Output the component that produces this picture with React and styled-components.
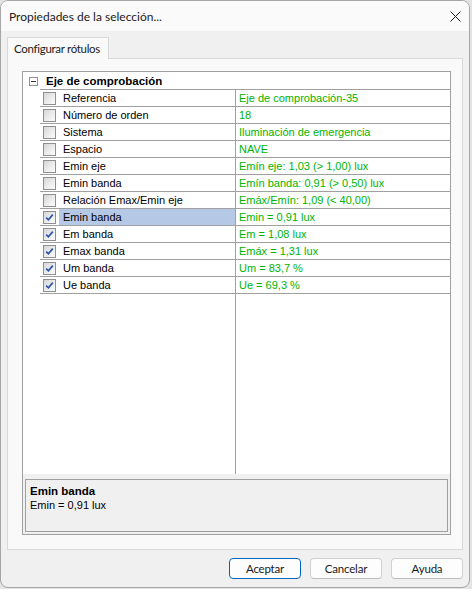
import React from 'react';
import styled, { createGlobalStyle } from 'styled-components';

const Global = createGlobalStyle`
  html, body { margin: 0; padding: 0; background: #e4e4e4; }
  body { width: 472px; height: 589px; overflow: hidden; }
  * { box-sizing: border-box; }
`;

const uiFont = `"Lato", "Noto Sans", sans-serif`;

const Window = styled.div`
  width: 470px;
  height: 588px;
  border: 1px solid #a6a6a6;
  border-radius: 8px;
  background: #f0f0f0;
  overflow: hidden;
  display: flex;
  flex-direction: column;
  font-family: ${uiFont};
  font-size: 12px;
  color: #000;
`;

const TitleBar = styled.div`
  height: 30px;
  flex: none;
  display: flex;
  align-items: center;
  justify-content: space-between;
  padding: 0 7px 0 8px;
  background: #fafafa;
`;

const Title = styled.span`
  font-size: 12px;
  color: #1a1a1a;
`;

const CloseButton = styled.span`
  width: 14px;
  height: 14px;
  display: flex;
  align-items: center;
  justify-content: center;
`;

const Body = styled.div`
  flex: 1;
  display: flex;
  flex-direction: column;
  padding: 6px 6px 0 6px;
  min-height: 0;
`;

const TabStrip = styled.div`
  display: flex;
  height: 21px;
  flex: none;
`;

const Tab = styled.div`
  height: 22px;
  width: 102px;
  padding: 0 0 0 6px;
  display: flex;
  align-items: center;
  border: 1px solid #d9d9d9;
  border-bottom: none;
  background: #f9f9f9;
  position: relative;
  z-index: 1;
  color: #1a1a1a;
  font-size: 11.5px;
  letter-spacing: -0.3px;
`;

const Panel = styled.div`
  height: 492px;
  flex: none;
  border: 1px solid #d9d9d9;
  background: #f9f9f9;
  padding: 12px 11px 14px 14px;
  display: flex;
  flex-direction: column;
`;

const GridBox = styled.div`
  flex: 1;
  border: 1px solid #a0a0a0;
  background: #f0f0f0;
  display: flex;
  flex-direction: column;
  font-family: "Liberation Sans", Arial, sans-serif;
  font-size: 11px;
`;

const PropList = styled.div`
  flex: 1;
  background: #fff;
  display: flex;
  flex-direction: column;
`;

const CategoryRow = styled.div`
  height: 18px;
  display: grid;
  grid-template-columns: 17px 1fr;
  flex: none;
`;

const Gutter = styled.div`
  display: flex;
  align-items: center;
  justify-content: flex-end;
  padding-right: 2px;
`;

const MinusBox = styled.span`
  width: 9px;
  height: 9px;
  border: 1px solid #919191;
  background: #fff;
  display: flex;
  align-items: center;
  justify-content: center;
  &::after {
    content: "";
    width: 5px;
    height: 1px;
    background: #333;
  }
`;

const CategoryLabel = styled.div`
  border-bottom: 1px solid #a0a0a0;
  padding-left: 6px;
  display: flex;
  align-items: center;
  font-weight: bold;
  font-size: 11.5px;
`;

const Row = styled.div`
  height: 17px;
  flex: none;
  display: grid;
  grid-template-columns: 17px 196px 1fr;
`;

const Filler = styled(Row)`
  flex: 1;
  height: auto;
`;

const LabelCell = styled.div`
  border-bottom: ${p => (p.$empty ? 'none' : '1px solid #a0a0a0')};
  border-right: 1px solid #a0a0a0;
  display: flex;
  align-items: center;
  padding-left: 3px;
`;

const ValueCell = styled.div`
  border-bottom: ${p => (p.$empty ? 'none' : '1px solid #a0a0a0')};
  display: flex;
  align-items: center;
  padding-left: 3px;
  color: #00b400;
  white-space: nowrap;
`;

const Check = styled.span`
  width: 13px;
  height: 13px;
  flex: none;
  border: 1px solid #8e8f8f;
  background: linear-gradient(135deg, #d6d6d6 0%, #eeeeee 60%, #fbfbfb 100%);
  display: flex;
  align-items: center;
  justify-content: center;
  margin-right: 3px;
`;

const LabelText = styled.span`
  flex: 1;
  align-self: stretch;
  display: flex;
  align-items: center;
  padding-left: 4px;
  background: ${p => (p.$selected ? '#b5c9e7' : 'transparent')};
  white-space: nowrap;
`;

const DescBox = styled.div`
  height: 53px;
  flex: none;
  margin: 5px 2px 2px 2px;
  border: 1px solid #a0a0a0;
  background: #f0f0f0;
  padding: 4px 4px;
  display: flex;
  flex-direction: column;
`;

const DescTitle = styled.div`
  font-weight: bold;
  font-size: 11.5px;
  line-height: 14px;
`;

const DescText = styled.div`
  line-height: 14px;
`;

const Footer = styled.div`
  flex: none;
  height: 37px;
  display: flex;
  justify-content: flex-end;
  gap: 9px;
  padding: 8px 6px 0 0;
`;

const Button = styled.button`
  width: 72px;
  height: 21px;
  font-family: ${uiFont};
  font-size: 11.5px;
  letter-spacing: -0.2px;
  color: #1a1a1a;
  background: #fdfdfd;
  border: 1px solid ${p => (p.$primary ? '#0067c0' : '#d0d0d0')};
  border-bottom-color: ${p => (p.$primary ? '#0067c0' : '#bcbcbc')};
  border-radius: 4px;
  padding: 0;
  display: flex;
  align-items: center;
  justify-content: center;
`;

const rows = [
  ['Referencia', 'Eje de comprobación-35', false],
  ['Número de orden', '18', false],
  ['Sistema', 'Iluminación de emergencia', false],
  ['Espacio', 'NAVE', false],
  ['Emin eje', 'Emín eje: 1,03 (> 1,00) lux', false],
  ['Emin banda', 'Emín banda: 0,91 (> 0,50) lux', false],
  ['Relación Emax/Emin eje', 'Emáx/Emín: 1,09 (< 40,00)', false],
  ['Emin banda', 'Emin = 0,91 lux', true, true],
  ['Em banda', 'Em = 1,08 lux', true],
  ['Emax banda', 'Emáx = 1,31 lux', true],
  ['Um banda', 'Um = 83,7 %', true],
  ['Ue banda', 'Ue = 69,3 %', true],
];

function CheckBox({ checked }) {
  return (
    <Check>
      {checked && (
        <svg width="9" height="9" viewBox="0 0 9 9">
          <path d="M1.2 4.6 L3.4 6.8 L7.8 1.6" fill="none" stroke="#2d55a8" strokeWidth="1.7" />
        </svg>
      )}
    </Check>
  );
}

export default function App() {
  return (
    <>
      <Global />
      <Window>
        <TitleBar>
          <Title>Propiedades de la selección...</Title>
          <CloseButton>
            <svg width="11" height="11" viewBox="0 0 11 11">
              <path d="M0.5 0.5 L10.5 10.5 M10.5 0.5 L0.5 10.5" stroke="#1b1b1b" strokeWidth="1" />
            </svg>
          </CloseButton>
        </TitleBar>
        <Body>
          <TabStrip>
            <Tab>Configurar rótulos</Tab>
          </TabStrip>
          <Panel>
            <GridBox>
              <PropList>
                <CategoryRow>
                  <Gutter><MinusBox /></Gutter>
                  <CategoryLabel>Eje de comprobación</CategoryLabel>
                </CategoryRow>
                {rows.map(([label, value, checked, selected], i) => (
                  <Row key={i}>
                    <div />
                    <LabelCell>
                      <CheckBox checked={checked} />
                      <LabelText $selected={selected}>{label}</LabelText>
                    </LabelCell>
                    <ValueCell>{value}</ValueCell>
                  </Row>
                ))}
                <Filler>
                  <div />
                  <LabelCell $empty />
                  <ValueCell $empty />
                </Filler>
              </PropList>
              <DescBox>
                <DescTitle>Emin banda</DescTitle>
                <DescText>Emin = 0,91 lux</DescText>
              </DescBox>
            </GridBox>
          </Panel>
        </Body>
        <Footer>
          <Button $primary>Aceptar</Button>
          <Button>Cancelar</Button>
          <Button>Ayuda</Button>
        </Footer>
      </Window>
    </>
  );
}
